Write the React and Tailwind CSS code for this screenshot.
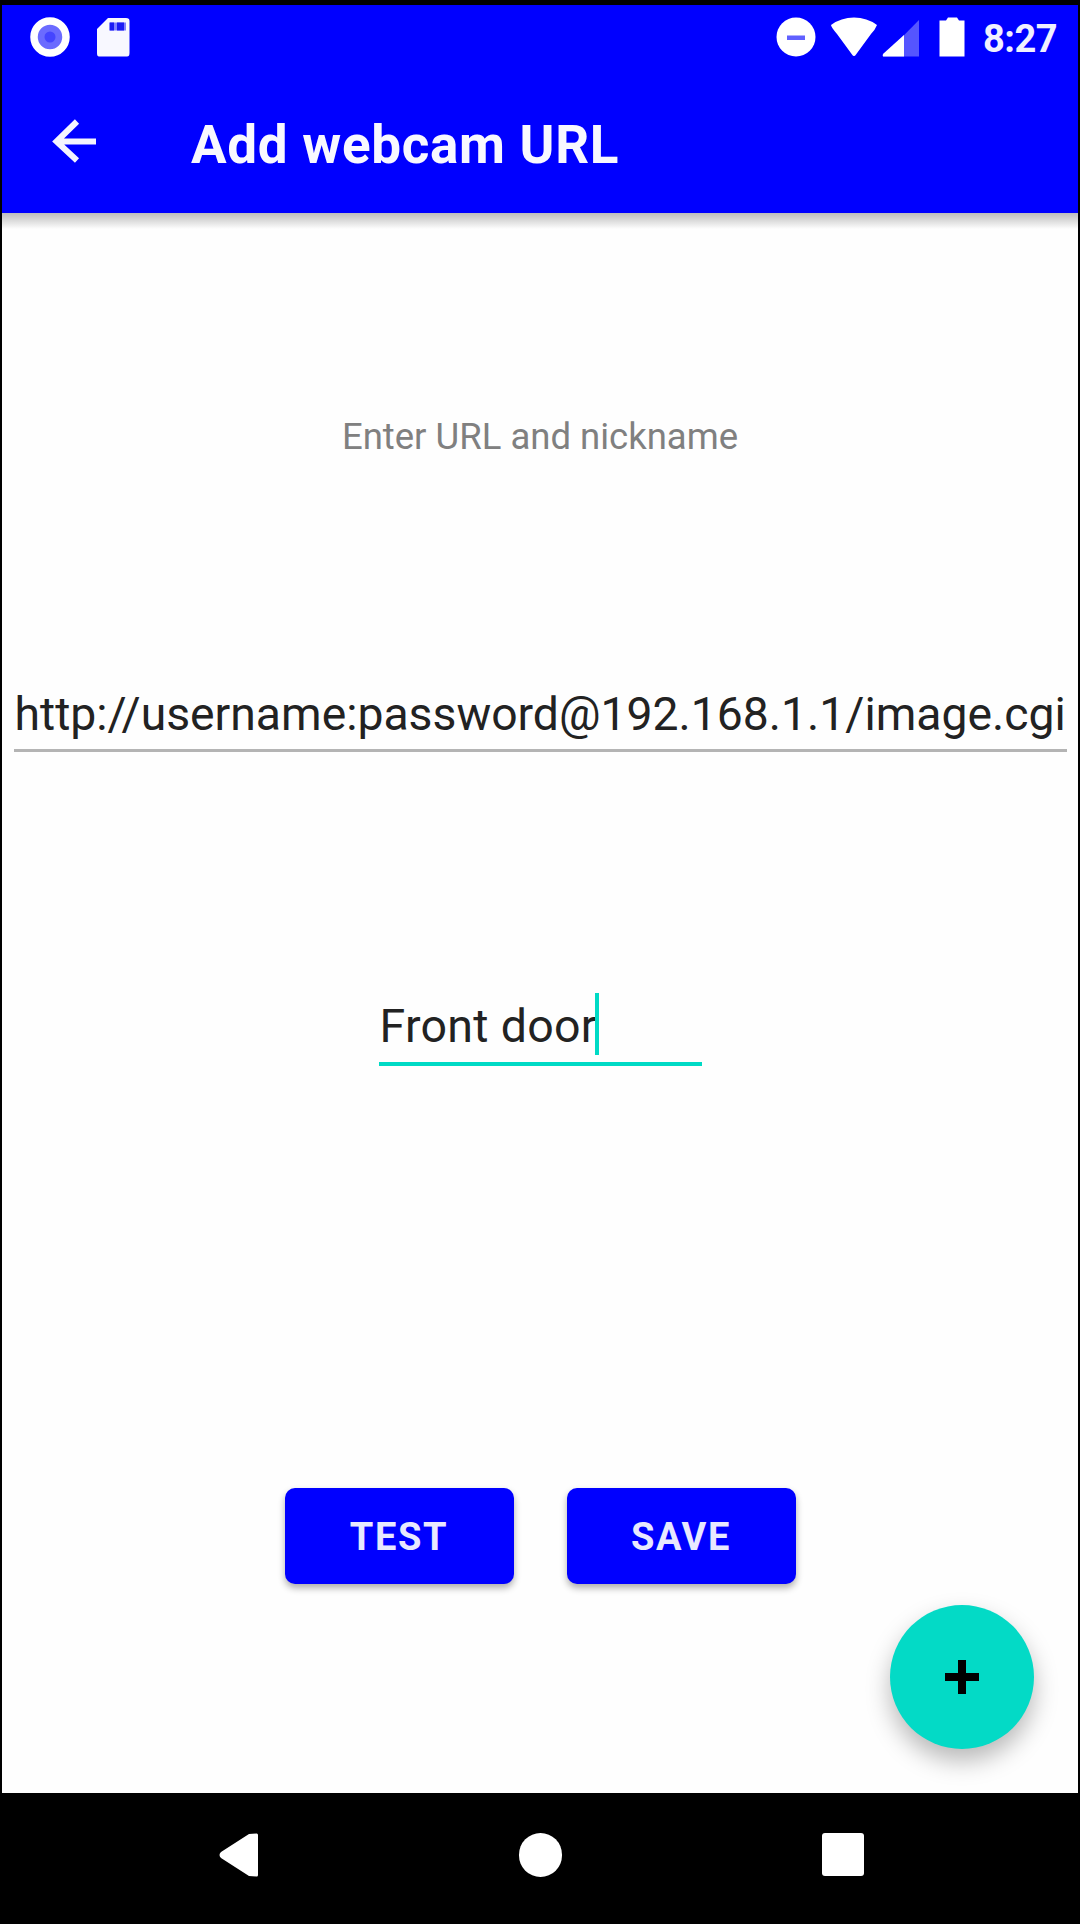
function StatusBar() {
  return (
    <div className="flex h-[64px] shrink-0 items-start pl-[28px] pr-[21px] pt-[12px] text-white">
      <svg className="h-[40px] w-[40px]" viewBox="0 0 40 40">
        <circle cx="20" cy="20" r="16" fill="#6b6bff" stroke="#fff" strokeWidth="7.5" />
        <circle cx="20" cy="20" r="5.5" fill="#4545ff" />
      </svg>
      <svg className="ml-[24px] h-[40px] w-[36px]" viewBox="0 0 36 40">
        <path d="M14 1H32Q35.500 1 35.500 4V36Q35.500 39.500 33 39.500H5Q3 39.500 3 36V12Z" fill="#f8f8ff" />
        <path d="M15 5.500h17v8H15z" fill="#8080ff" />
        <path d="M16 5.500h4v8h-4zM23 5.500h7v8h-7z" fill="#1c1cf5" />
      </svg>
      <div className="ml-auto flex items-start">
        <svg className="h-[40px] w-[40px]" viewBox="0 0 40 40">
          <circle cx="20" cy="20" r="19.500" fill="#fff" />
          <rect x="11" y="18.500" width="18" height="4.500" fill="#6060ff" />
        </svg>
        <svg className="ml-[14px] h-[40px] w-[48px]" viewBox="0 0 48 40">
          <path d="M1 8Q11 .5 24 .5T47 8Q45 13 41 17L26 37.500Q24 40.500 22 37.500L7 17Q1 10 1 8Z" fill="#fff" />
        </svg>
        <svg className="ml-[4px] h-[40px] w-[38px]" viewBox="0 0 38 40">
          <path d="M37 3V39.500H1Z" fill="#5555ff" />
          <path d="M22 18V39.500H1Q0 38 1.500 36.500Z" fill="#fff" />
        </svg>
        <svg className="ml-[19px] h-[40px] w-[26px]" viewBox="0 0 26 40">
          <path d="M9 .5H18L20 3.500H25.500V39.500H.5V3.500H7Z" fill="#fff" />
        </svg>
        <span className="ml-[18px] mt-[2px] w-[74px] whitespace-nowrap text-[38px] font-bold leading-[40px] tracking-[-0.500px] text-[#f0f0ff]">8:27</span>
      </div>
    </div>
  );
}

function AppBar() {
  return (
    <div className="flex flex-1 items-start pl-[49px] text-white">
      <svg className="mt-[50px] h-[44px] w-[47px]" viewBox="0 0 47 44" fill="none" stroke="#f4f4ff" strokeWidth="6">
        <path d="M26 2.500L5.500 22.500L26 41.500M6 22.500H45" />
      </svg>
      <h1 className="ml-[93px] mt-[44px] whitespace-nowrap text-[53px] font-bold leading-[64px] tracking-[0.700px] text-[#f8f8ff]">Add webcam URL</h1>
    </div>
  );
}

function ActionButton({ children }) {
  return (
    <button className="flex h-[96px] w-[229px] items-center justify-center rounded-[10px] bg-[#0000ff] pt-[3px] text-[38px] font-bold tracking-[1.600px] text-[#e8e8ff] shadow-[0_4px_7px_rgba(0,0,0,0.32)]">
      {children}
    </button>
  );
}

export default function App() {
  return (
    <div className="flex h-[1924px] w-[1080px] flex-col overflow-hidden bg-black px-[2px] pt-[5px] font-['Roboto',sans-serif]">
      <header className="relative z-10 flex h-[208px] shrink-0 flex-col bg-[#0000ff]">
        <StatusBar />
        <AppBar />
      </header>
      <main className="relative flex h-[1580px] shrink-0 flex-col items-center bg-[#fefefe]">
        <div className="h-[16px] w-full shrink-0 bg-gradient-to-b from-[#bdbdbd] to-[#fefefe]" />
        <p className="mt-[184px] whitespace-nowrap text-[36.500px] leading-[48px] text-[#808080]">Enter URL and nickname</p>
        <div className="mt-[222px] flex h-[69px] w-[1053px] flex-col border-b-3 border-[#b4b4b4]">
          <span className="ml-px whitespace-nowrap text-[46.300px] leading-[62px] text-[#222]">http://username:password@192.168.1.1/image.cgi</span>
        </div>
        <div className="mt-[240px] flex h-[74px] w-[323px] items-start border-b-4 border-[#00dac5]">
          <span className="ml-px mt-[3px] whitespace-nowrap text-[46.500px] leading-[62px] tracking-[0.300px] text-[#222]">Front door</span>
          <span className="-ml-[2px] mt-px h-[62px] w-[4px] bg-[#00dac5]" />
        </div>
        <div className="mt-[422px] flex gap-[53px]">
          <ActionButton>TEST</ActionButton>
          <ActionButton>SAVE</ActionButton>
        </div>
        <button className="absolute bottom-[44px] right-[44px] flex h-[144px] w-[144px] items-center justify-center rounded-full bg-[#03dac6] shadow-[0_12px_24px_rgba(0,0,0,0.28)]">
          <svg className="h-[34px] w-[34px]" viewBox="0 0 34 34" fill="#000">
            <path d="M13 0h8v13H34v8H21V34h-8V21H0v-8h13z" />
          </svg>
        </button>
      </main>
      <nav className="flex flex-1 items-start pl-[217px] pt-[40px]">
        <svg className="h-[44px] w-[40px]" viewBox="0 0 40 44">
          <path d="M39 2V42Q39 44 37 43.500L30 43L2 25Q-1 22 2 19L30 1L37 .5Q39 0 39 2Z" fill="#fff" />
        </svg>
        <span className="ml-[260px] h-[44px] w-[43px] rounded-full bg-white" />
        <span className="ml-[260px] h-[43px] w-[42px] rounded-[3px] bg-white" />
      </nav>
    </div>
  );
}
